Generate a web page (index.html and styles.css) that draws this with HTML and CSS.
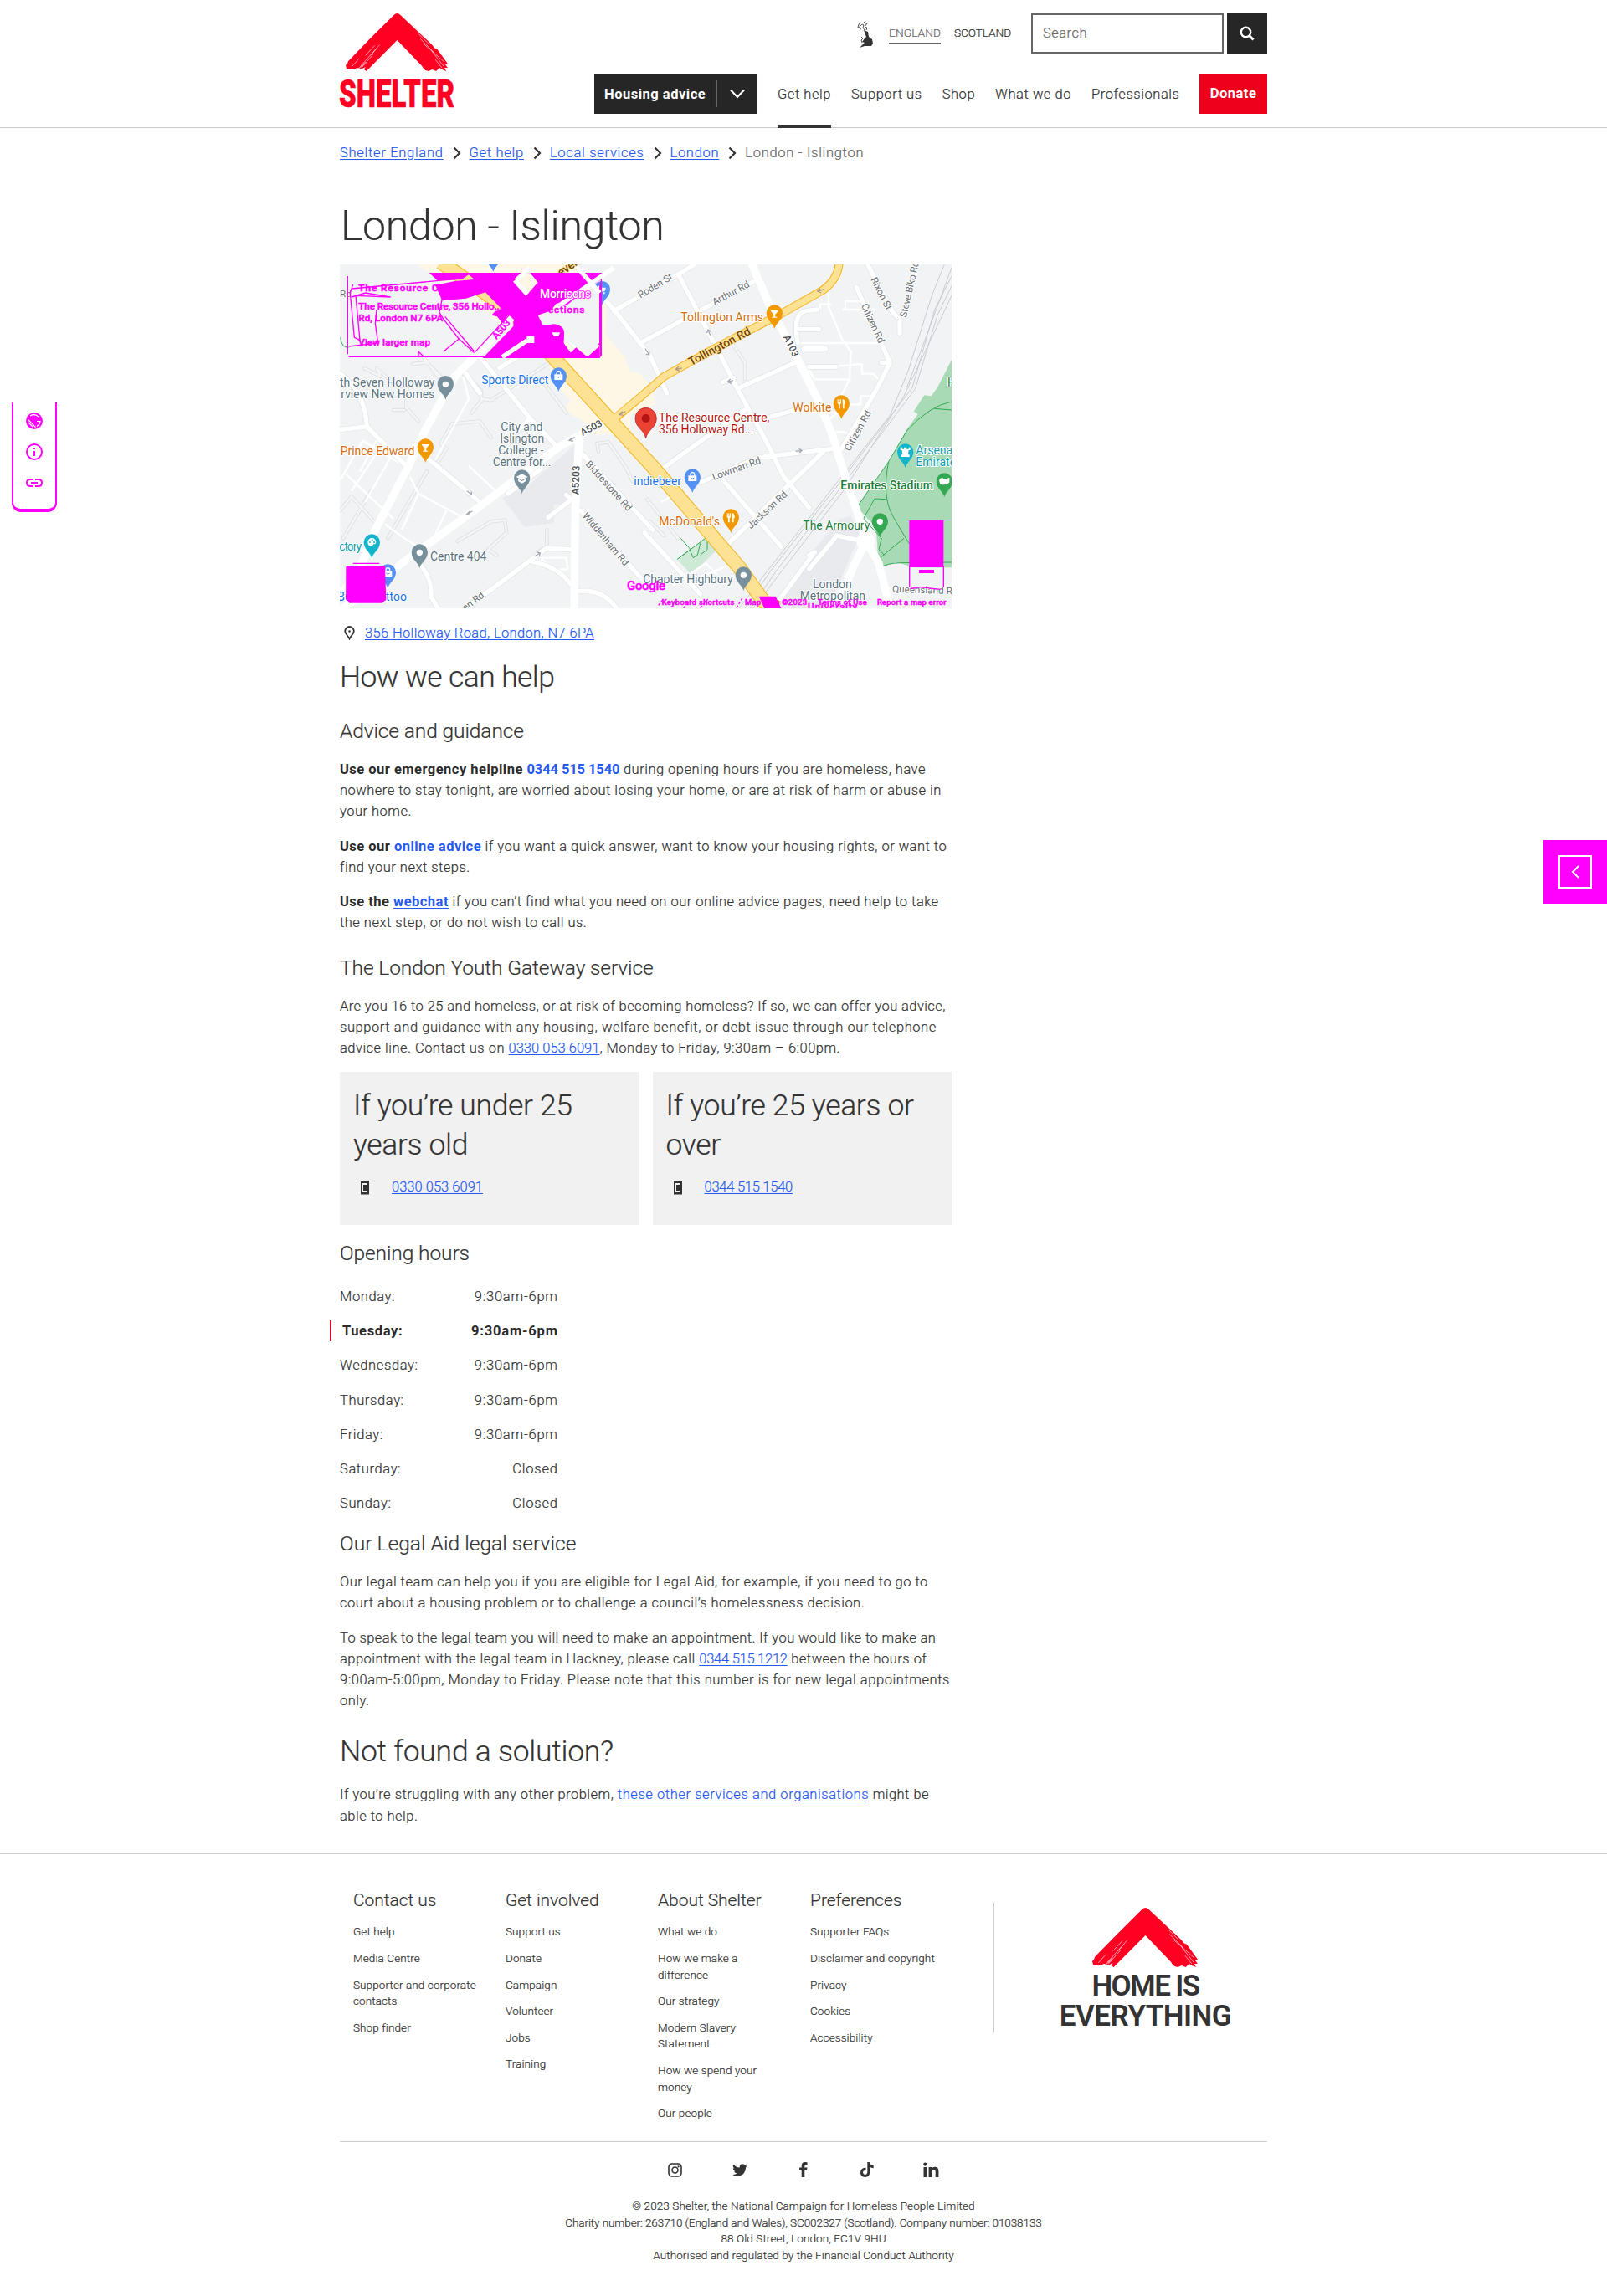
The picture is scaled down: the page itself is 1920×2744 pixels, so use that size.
FILE: index.html
```html
<!DOCTYPE html>
<html lang="en">
<head>
<meta charset="utf-8">
<title>London - Islington - Shelter England</title>
<link rel="stylesheet" href="styles.css">
</head>
<body>
<svg class="defs" width="0" height="0" aria-hidden="true">
  <defs>
    <symbol id="roof" viewBox="0 0 124 71" preserveAspectRatio="none">
      <path fill="#ff0022" d="M58 2Q62 -2 66 2L104 38L107 42L110 43L123 61L120 62L123 66L119 66L121 70L116 68L113 66L109 70L104 68L100 70L96 69L93 66L92 64L62 32.500L25 70L22 68L24 65L18 68L14 66L9 68L5 67L1 67L0 63L2 61L3 58L30 30Z"/>
      <path stroke="#fff" stroke-width=".6" fill="none" d="M41 38L18 64M37 43L30 51M33 50L19 66M35 39L24 51M24 59L15 67M16 55L7 65M90 31L106 47M88 25L101 38M94 37L119 59M104 46L118 64M108 56L116 66M22 62L16 67"/>
    </symbol>
    <symbol id="chev" viewBox="0 0 10 16"><path d="M1.500 1.500L8 8L1.500 14.500" fill="none" stroke="#333" stroke-width="2.200"/></symbol>
    <symbol id="phone" viewBox="0 0 10 17"><path fill="#333" fill-rule="evenodd" d="M0 1H8V0H10V16.500H0ZM2 3V14H8V3ZM3 5H7V12H3Z"/></symbol>
    <g id="pin"><path d="M0 57C-4 38 -29 26 -29 0A29 29 0 0 1 29 0C29 26 4 38 0 57Z"/></g>
    <g id="fork" fill="#fff"><path d="M-14 -16H-11V-6H-9V-16H-6V-6H-4V-16H-1V-4Q-1 1 -5 2V17H-10V2Q-14 1 -14 -4ZM4 -16Q13 -16 13 -4V2H10V17H5Z"/></g>
    <g id="glass" fill="#fff"><path d="M-13 -13H13V-10L3 1V10H9V13H-9V10H-3V1L-13 -10Z"/></g>
    <g id="bag"><path fill="#fff" d="M-15 -5H15V15H-15Z"/><path d="M-7 -4V-9A7 7 0 0 1 7 -9V-4" fill="none" stroke="#fff" stroke-width="4"/><path d="M-6 3Q0 10 6 3" fill="none" stroke="#5491f5" stroke-width="3"/></g>
    <path id="minor" d="M105 390L165 420L150 390L215 450L260 460L255 530L300 580M250 540H210M280 375L330 370L390 430M310 340L385 440M460 410L525 470V510M830 550L740 430M490 550L530 500L560 505L770 370M360 740L400 680L380 660L420 590L520 580L560 640M20 900L60 850L150 950M30 1000L130 830M190 1000L330 760M440 1010L560 940L610 935L615 980L550 1040L580 1060M700 1080L740 1040L760 1040M760 970V1040M945 690L940 660L980 655L1040 740L1070 800M1120 860L1230 1000M1130 940L1180 990M1410 280L1470 370V430"/>
    <path id="local" d="M20 410Q110 480 115 600L250 735M20 610L115 600M330 710L520 870M470 410L520 480M520 350L700 570L790 665M590 390L700 320M700 570L650 620M620 840L740 750M765 925L850 860L830 845M890 700L1140 970M880 900L1140 1190M310 1100Q350 1150 345 1210L370 1251M470 1251L740 1050L760 1035L850 1040M710 1085Q800 1100 850 1170M870 1190Q960 1180 1010 1251M640 80L860 310M780 200L915 80M860 18L1000 180L1130 345L1190 480M1000 185L1220 60L1290 18M1095 300L1500 80M1235 60L1380 340L1430 440L1540 640L1610 780L1700 890M1390 440L1430 425M1450 460L1650 370M1180 745L1470 540M1540 570L1650 540M1310 800L1520 710L1780 680M1390 790L1600 1030M1410 1020L1750 690M1660 300Q1640 190 1690 185L1730 180M1660 250H1735M1680 320H1760M1700 385H1795M1870 100L1990 370L1940 470L1810 690M1910 18L2000 190L2025 215V265M1990 370H1960M1110 980L1310 1200M1700 1110L1800 990L1890 1010M1570 1251L1720 1050L1700 1060"/>
  </defs>
</svg>

<header class="header">
  <div class="wrap header-in">
    <a class="logo" href="#">
      <svg class="logo-roof"><use href="#roof"/></svg>
      <svg class="logo-word" viewBox="0 0 137 34"><text x="-1" y="33" textLength="138" lengthAdjust="spacingAndGlyphs">SHELTER</text></svg>
    </a>
    <div class="header-right">
      <div class="top-row">
        <svg class="uk" viewBox="0 0 20 33"><path fill="#333" d="M8 12L13 14L14 20L18 23L19 28L17 31L9 31L3 33L7 29L9 27L6 26L9 22L11 20Z"/><path fill="none" stroke="#555" stroke-width="1" d="M9 12L7 9L8 6L6 5L3 8L1 9L2 5L5 3M8 3L10 1L9 4L12 4L9 8L12 9L11 12M5 9L3 13M5 20L7 22L5 24L6 27"/></svg>
        <a class="region current" href="#">ENGLAND</a>
        <a class="region" href="#">SCOTLAND</a>
        <div class="search">Search</div>
        <div class="search-btn"><svg width="20" height="20" viewBox="0 0 20 20"><circle cx="8.500" cy="8.500" r="5.700" fill="none" stroke="#fff" stroke-width="2.400"/><path d="M12.500 12.500L17.500 17.500" stroke="#fff" stroke-width="3"/></svg></div>
      </div>
      <nav class="nav">
        <a class="advice" href="#"><span>Housing advice</span><i></i><svg width="18" height="12" viewBox="0 0 18 12"><path d="M1 1.500L9 10L17 1.500" fill="none" stroke="#fff" stroke-width="2.200"/></svg></a>
        <a class="link active" href="#">Get help</a>
        <a class="link" href="#">Support us</a>
        <a class="link" href="#">Shop</a>
        <a class="link" href="#">What we do</a>
        <a class="link" href="#">Professionals</a>
        <a class="donate" href="#">Donate</a>
      </nav>
    </div>
  </div>
</header>

<main class="wrap main">
  <div class="crumbs">
    <a href="#">Shelter England</a><svg><use href="#chev"/></svg><a href="#">Get help</a><svg><use href="#chev"/></svg><a href="#">Local services</a><svg><use href="#chev"/></svg><a href="#">London</a><svg><use href="#chev"/></svg><span>London - Islington</span>
  </div>
  <h1>London - Islington</h1>

  <svg class="map" viewBox="18 18 2193 1233">
    <rect x="18" y="18" width="2193" height="1233" fill="#f1f3f4"/>
    <!-- land areas -->
    <path fill="#fef7e6" d="M295 18H860L975 120L970 270L1040 350L1060 405L1090 405L1130 450L1150 520L1060 560L1060 628H960L925 625L890 580L820 540L845 505L800 460L755 355L500 160Z"/>
    <path fill="#e8eaed" d="M600 855L690 815L750 760L860 665L850 870L785 880V945L680 960ZM1710 1050L1810 930L1850 920L1885 990L1850 1060L1800 1180L1760 1251H1560L1620 1200Z"/>
    <path fill="#a8dab5" d="M2211 360L2160 460L2138 490L2113 487L2075 545L2090 555L2050 610L1990 720L1872 888L1910 930L1940 960L1950 1108L2010 1085L2080 1105H2211Z"/>
    <path fill="#ceead6" d="M1230 1080L1340 985L1385 1025L1280 1130Z"/>
    <g fill="none" stroke="#34a853" stroke-width="3">
      <path d="M2211 510Q2130 525 2050 615L1985 725L1872 888M1985 725Q1960 850 2000 920T2060 1020M1895 930L1935 858L1975 860M1895 930L1960 1000L1950 1040L1970 1060M2040 1000L1940 1082M1950 1108Q1980 1088 2030 1088L2211 1086M2150 535L2211 540M1240 1000L1275 1040L1228 1075L1342 990M1272 1040L1285 1070L1300 1060L1310 1018M1310 1060L1335 1040V1010M20 280Q25 320 50 315"/>
    </g>
    <!-- railway -->
    <g fill="none" stroke="#c9ccd1" stroke-width="3">
      <path d="M2211 60L2150 180L2070 460L1810 800L1560 1120L1470 1251M2211 95L2160 200L2080 465L1820 810L1580 1120L1490 1251M2211 130L2040 490L1830 820L1600 1120L1500 1251M2185 18L2140 130L2055 400L1990 560L1800 800L1540 1130L1450 1251M2211 30L2100 330L2050 460"/>
    </g>
    <!-- residential streets: casing below, surface on top -->
    <g class="streets"><use href="#minor" class="casing"/><use href="#minor" class="surface"/></g>
    <g fill="none" stroke="#fff" stroke-width="7" stroke-linejoin="round">
      <path d="M20 790L100 650L250 740M60 830L160 680M110 870L200 710M40 770L210 930M150 650L90 760M180 950L250 1000L330 1050M240 970L300 840L450 920M300 840L270 780M400 900L350 1010M360 720L480 500L460 420M480 740L580 833M740 1070H830L835 1110L780 1115Z"/>
      <path d="M1770 120V170L1820 290L1850 330L1845 430L1800 520M1660 300H1950M1690 380L1720 430H1850M1820 180H1940M1830 180V150H1890M1740 180V160H1780M1720 390L1890 375V410H1930L1950 430M1885 520V490H1930M1830 520H1885M1790 620Q1850 610 1870 660M1765 580L1800 550M1170 870L1220 840M1210 1170L1330 1090L1370 1130M1280 1150L1430 1090M1980 1180H2060"/>
    </g>
    <!-- local roads -->
    <g class="streets"><use href="#local" class="road-edge"/><use href="#local" class="road-top"/></g>
    <!-- trunk roads -->
    <g fill="none" stroke="#fff" stroke-width="28" stroke-linejoin="round" stroke-linecap="round">
      <path d="M20 1200L80 1130L150 960L265 740L325 610L430 420L520 330L640 205M30 1251L240 1090L520 885L800 675L965 580M875 650L862 900L858 1251M1495 18L1565 180L1650 340L1730 500L1780 620L1830 780L1880 930L1905 1010L1860 1100L1790 1270M1905 1010L1950 1090L1990 1251"/>
      <circle cx="1903" cy="1010" r="22" stroke-width="22"/>
    </g>
    <g fill="none" stroke="#f5b21a" stroke-linejoin="round">
      <path stroke-width="52" d="M380 10L640 190L800 370L1000 590L1150 755L1330 965L1450 1105L1540 1230L1590 1251"/>
      <path stroke-width="30" d="M1010 565L1100 490L1180 420L1360 320L1600 195L1750 110Q1805 70 1808 10"/>
    </g>
    <g fill="none" stroke="#fde293" stroke-linejoin="round">
      <path stroke-width="46" d="M380 10L640 190L800 370L1000 590L1150 755L1330 965L1450 1105L1540 1230L1590 1251"/>
      <path stroke-width="24" d="M990 580L1100 490L1180 420L1360 320L1600 195L1750 110Q1805 70 1808 10"/>
    </g>
    <!-- one-way arrows -->
    <g fill="none" stroke="#a3a8b5" stroke-width="4">
      <path d="M860 638L840 649M851 638L840 649L855 652M493 903L473 914M484 903L473 914L488 917M474 830L491 844M489 832L491 844L478 845M718 1064L736 1052M724 1050L736 1052L733 1065M1652 688L1674 685M1664 679L1674 685L1666 693M1428 434L1408 439M1418 429L1408 439L1422 445M1346 272L1338 252M1334 264L1338 252L1349 259M1113 320L1127 342M1127 330L1127 342L1116 340"/>
      <path stroke="#b09a80" d="M1042 545L1020 556M1031 545L1020 556L1035 559M1244 390L1222 394M1233 384L1222 394L1236 400M1752 108L1730 114M1740 104L1730 114L1744 120"/>
    </g>
    <!-- road names -->
    <g class="road">
      <text x="888" y="634" class="dk" transform="rotate(-28 888 634)">A503</text>
      <text x="874" y="844" class="dk" textLength="104" transform="rotate(-88 874 844)">A5203</text>
      <text x="1607" y="278" class="dk" transform="rotate(64 1607 278)">A103</text>
      <text x="897" y="735" textLength="228" transform="rotate(48 897 735)">Biddestone Rd</text>
      <text x="886" y="920" textLength="236" transform="rotate(50 886 920)">Widdenham Rd</text>
      <text x="468" y="1262" transform="rotate(-37 468 1262)">en Rd</text>
      <text x="1096" y="140" textLength="137" transform="rotate(-31 1096 140)">Roden St</text>
      <text x="1361" y="165" textLength="145" transform="rotate(-28 1361 165)">Arthur Rd</text>
      <text x="1358" y="792" textLength="182" transform="rotate(-20 1358 792)">Lowman Rd</text>
      <text x="1492" y="968" textLength="180" transform="rotate(-43 1492 968)">Jackson Rd</text>
      <text x="1846" y="690" textLength="160" transform="rotate(-61 1846 690)">Citizen Rd</text>
      <text x="1886" y="165" textLength="152" transform="rotate(65 1886 165)">Citizen Rd</text>
      <text x="1920" y="72" textLength="126" transform="rotate(63 1920 72)">Rixon St</text>
      <text x="2048" y="210" textLength="205" transform="rotate(-77 2048 210)">Steve Biko Rd</text>
      <text x="1998" y="1193" textLength="215" transform="rotate(2 1998 1193)">Queensland R</text>
      <text x="18" y="136">Rd</text>
      <text x="1277" y="382" class="brown" textLength="245" transform="rotate(-28 1277 382)">Tollington Rd</text>
      <text x="810" y="62" class="brown" transform="rotate(-35 810 62)">even</text>
    </g>
    <!-- places -->
    <g class="place">
      <g fill="#78909c"><use href="#pin" x="397" y="446"/><use href="#pin" x="671" y="783"/><use href="#pin" x="304" y="1050"/><use href="#pin" x="1465" y="1131"/></g>
      <g fill="#f29900"><use href="#pin" x="325" y="672"/><use href="#pin" x="1576" y="192"/><use href="#pin" x="1816" y="516"/><use href="#pin" x="1420" y="924"/></g>
      <g fill="#5491f5"><use href="#pin" x="802" y="417"/><use href="#pin" x="1282" y="780"/><use href="#pin" x="190" y="1122"/><use href="#pin" x="958" y="107"/><use href="#pin" x="568" y="-12"/></g>
      <g fill="#12b5cb"><use href="#pin" x="133" y="1014"/><use href="#pin" x="2045" y="690"/></g>
      <g fill="#34a853"><use href="#pin" x="1954" y="939"/><use href="#pin" x="2185" y="795"/></g>
      <g fill="#fff"><circle cx="397" cy="448" r="11"/><circle cx="304" cy="1051" r="11"/><circle cx="1465" cy="1132" r="11"/><circle cx="1954" cy="940" r="11"/><path d="M650 780L671 769L692 780L671 791ZM657 787L671 795L685 787V795L671 803L657 795ZM2027 674H2033V680H2040V674H2050V680H2057V674H2063V684H2057L2055 700H2060V708H2030V700H2035L2033 684H2027ZM2166 792Q2175 775 2185 790L2203 782V800Q2190 812 2170 806Z"/><path fill-rule="evenodd" d="M118 1014A15 15 0 0 1 148 1014Q148 1023 139 1021Q134 1024 137 1029Q118 1030 118 1014ZM123 1014a3 3 0 1 0 6 0a3 3 0 1 0 -6 0ZM131 1006a3 3 0 1 0 6 0a3 3 0 1 0 -6 0ZM138 1014a3 3 0 1 0 6 0a3 3 0 1 0 -6 0Z"/><path d="M943 95H949L951 101H972L967 115H950ZM950 118h6v6h-6ZM962 118h6v6h-6Z"/></g>
      <use href="#glass" x="325" y="676"/><use href="#glass" x="1576" y="196"/><use href="#fork" x="1816" y="518"/><use href="#fork" x="1420" y="926"/><use href="#bag" x="802" y="417"/><use href="#bag" x="1282" y="780"/><use href="#bag" x="190" y="1122"/>
      <path fill="#ea4335" stroke="#b31412" stroke-width="2" d="M1115 641C1108 610 1077 603 1077 570A38 38 0 0 1 1153 570C1153 603 1122 610 1115 641Z"/><circle cx="1115" cy="570" r="15" fill="#b31412"/>
    </g>
    <g class="label">
      <g fill="#5c7480">
        <text x="18" y="457" textLength="340">th Seven Holloway</text><text x="22" y="499" textLength="336">rview New Homes</text>
        <text x="595" y="616" textLength="150">City and</text><text x="592" y="657" textLength="159">Islington</text><text x="586" y="700" textLength="162">College -</text><text x="566" y="741" textLength="209">Centre for...</text>
        <text x="342" y="1081" textLength="202">Centre 404</text><text x="1105" y="1161" textLength="322">Chapter Highbury</text>
        <text x="1713" y="1180" textLength="140">London</text><text x="1667" y="1222" textLength="235">Metropolitan</text>
      </g>
      <g fill="#1a73e8"><text x="526" y="448" textLength="240">Sports Direct</text><text x="1072" y="811" textLength="170">indiebeer</text><text x="10" y="1225" textLength="248">Bunch Tattoo</text></g>
      <g fill="#d56e0c"><text x="20" y="703" textLength="266">Prince Edward</text><text x="1240" y="223" textLength="296">Tollington Arms</text><text x="1642" y="547" textLength="138">Wolkite</text><text x="1162" y="955" textLength="218">McDonald's</text></g>
      <g fill="#129eaf"><text x="16" y="1045" textLength="80">ctory</text><text x="2083" y="700">Arsenal</text><text x="2083" y="741">Emirates</text></g>
      <g fill="#188038"><text x="1813" y="826" textLength="332" class="md">Emirates Stadium</text><text x="1678" y="970" textLength="240">The Armoury</text><text x="2196" y="457">Hi</text></g>
      <g fill="#b31412"><text x="1161" y="583" textLength="397">The Resource Centre,</text><text x="1161" y="625" textLength="340">356 Holloway Rd...</text></g>
    </g>
    <!-- highlighted panels over the map -->
    <g fill="#f0f">
      <path fill-rule="evenodd" d="M338 48H950L957 56V345L948 354H530L640 240V215L622 198L600 228L582 205L562 200L575 185L600 180L540 118L470 140L385 148L360 92L430 78L500 72L480 55L455 72L368 76ZM650 75L672 50L700 48L790 150L730 190L745 225L790 240L820 270V300L845 335L865 318L905 350H950V310L915 280L910 230L935 160L955 70L900 100L830 170L800 160L860 90L730 80L690 125Z" />
      <path d="M700 48H900L860 110L800 150L770 190L730 200L690 130L730 85ZM860 48H957V70L930 90L900 75L880 100L830 150L790 160Z"/>
      <path d="M42 1098H180L184 1220L170 1232H52L40 1215ZM2059 936H2182V1104H2059ZM2094 1113H2148V1125H2094ZM1520 1208H1580L1600 1251H1540Z"/>
    </g>
    <path fill="#f1f3f4" d="M728 200L830 165L890 120L948 100V300L910 340L865 310L825 290Q825 240 785 235L745 235Z"/>
    <path fill="#f0f" d="M748 262A37 30 0 0 1 822 262Q822 285 820 300L845 335L865 316L905 350L950 310V354H600L700 275ZM760 48H920L830 120L785 160L735 140Z"/>
    <g fill="none" stroke="#f0f" stroke-width="4">
      <path d="M955 60V345M46 60V340M50 349H950M65 90L55 120L70 280L90 290L75 130L200 135L110 120L60 135M60 105L440 70M150 180L145 230L155 300L50 312M385 140L375 190L390 215L445 285L390 330M445 285L500 335M395 205L500 330M300 345V330L320 350M65 1090H160M42 1100V1220M2060 1100V1175M2182 1100V1175M2062 1181L2100 1175L2170 1183" />
      <path stroke="#fff" stroke-width="16" d="M645 75L690 125M650 75L700 30M805 165L1000 30M870 30L950 120M600 350L690 290"/>
      <path stroke="#fff" stroke-width="24" d="M505 340L635 210"/>
      <path d="M500 335L625 200"/>
      <path stroke-dasharray="10 6" d="M1160 1240L1180 1215M1250 1250L1280 1215M1310 1250L1340 1215M1440 1250L1460 1215"/>
    </g>
    <path fill="#fff" d="M778 262H808L802 275H785ZM688 275H715V300H688Z"/>
    <g class="hot">
      <text x="85" y="115" textLength="330" class="b">The Resource Cen</text><text x="450" y="115">...</text>
      <text x="85" y="179" textLength="515">The Resource Centre, 356 Hollo...</text>
      <text x="85" y="221" textLength="303">Rd, London N7 6PA</text>
      <text x="85" y="308" textLength="257">View larger map</text>
      <text x="765" y="191" textLength="130">ections</text>
      <text x="735" y="139" textLength="183" class="lg">Morrisons</text>
      <text x="580" y="288" transform="rotate(-50 580 288)" class="sm">A503</text>
      <text x="1047" y="1184" textLength="138" class="g">Google</text>
      <text x="1172" y="1238" textLength="260" class="xs">Keyboard shortcuts</text><text x="1470" y="1238" textLength="222" class="xs">Map data ©2023</text><text x="1732" y="1238" textLength="175" class="xs">Terms of Use</text><text x="1944" y="1238" textLength="248" class="xs">Report a map error</text>
      <text x="1695" y="1258" textLength="178">University</text>
    </g>
  </svg>

  <p class="address"><svg width="13" height="17" viewBox="0 0 13 17"><path d="M6.500 15.500C5 12 1.200 9.500 1.200 6.300A5.300 5.300 0 0 1 11.800 6.300C11.800 9.500 8 12 6.500 15.500Z" fill="none" stroke="#333" stroke-width="1.800"/><circle cx="6.500" cy="6.500" r="1.200" fill="#333"/></svg><a href="#">356 Holloway Road, London, N7 6PA</a></p>

  <h2 class="h-help">How we can help</h2>
  <h3 class="h-advice">Advice and guidance</h3>
  <p><b>Use our emergency helpline <a class="tel" href="#">0344 515 1540</a></b> during opening hours if you are homeless, have<br>nowhere to stay tonight, are worried about losing your home, or are at risk of harm or abuse in<br>your home.</p>
  <p><b>Use our <a href="#">online advice</a></b> if you want a quick answer, want to know your housing rights, or want to<br>find your next steps.</p>
  <p><b>Use the <a href="#">webchat</a></b> if you can’t find what you need on our online advice pages, need help to take<br>the next step, or do not wish to call us.</p>

  <h3 class="h-youth">The London Youth Gateway service</h3>
  <p><span class="snug">Are you 16 to 25 and homeless, or at risk of becoming homeless? If so, we can offer you advice,</span><br><span class="loose">support and guidance with any housing, welfare benefit, or debt issue through our telephone</span><br>advice line. Contact us on <a class="tel" href="#">0330 053 6091</a>, Monday to Friday, 9:30am – 6:00pm.</p>

  <div class="cards">
    <section class="card"><h2>If you’re under 25<br>years old</h2><div class="call"><svg><use href="#phone"/></svg><a class="tel" href="#">0330 053 6091</a></div></section>
    <section class="card"><h2>If you’re 25 years or<br>over</h2><div class="call"><svg><use href="#phone"/></svg><a class="tel narrow" href="#">0344 515 1540</a></div></section>
  </div>

  <h3 class="h-hours">Opening hours</h3>
  <div class="hours">
    <div><span>Monday:</span><span>9:30am-6pm</span></div>
    <div class="today"><span>Tuesday:</span><span>9:30am-6pm</span></div>
    <div><span>Wednesday:</span><span>9:30am-6pm</span></div>
    <div><span>Thursday:</span><span>9:30am-6pm</span></div>
    <div><span>Friday:</span><span>9:30am-6pm</span></div>
    <div><span>Saturday:</span><span>Closed</span></div>
    <div><span>Sunday:</span><span>Closed</span></div>
  </div>

  <h3 class="h-legal">Our Legal Aid legal service</h3>
  <p>Our legal team can help you if you are eligible for Legal Aid, for example, if you need to go to<br>court about a housing problem or to challenge a council’s homelessness decision.</p>
  <p><span class="snug">To speak to the legal team you will need to make an appointment. If you would like to make an</span><br>appointment with the legal team in Hackney, please call <a class="tel narrow" href="#">0344 515 1212</a> between the hours of<br><span class="loose">9:00am-5:00pm, Monday to Friday. Please note that this number is for new legal appointments</span><br>only.</p>

  <h2 class="h-more">Not found a solution?</h2>
  <p>If you’re struggling with any other problem, <a class="loose" href="#">these other services and organisations</a> might be<br>able to help.</p>
</main>

<footer class="footer">
  <div class="wrap">
    <div class="foot-top">
      <div class="col"><h4>Contact us</h4><a>Get help</a><a>Media Centre</a><a>Supporter and corporate<br>contacts</a><a>Shop finder</a></div>
      <div class="col"><h4>Get involved</h4><a>Support us</a><a>Donate</a><a>Campaign</a><a>Volunteer</a><a>Jobs</a><a>Training</a></div>
      <div class="col"><h4>About Shelter</h4><a>What we do</a><a>How we make a<br>difference</a><a>Our strategy</a><a>Modern Slavery<br>Statement</a><a>How we spend your<br>money</a><a>Our people</a></div>
      <div class="col"><h4>Preferences</h4><a>Supporter FAQs</a><a>Disclaimer and copyright</a><a>Privacy</a><a>Cookies</a><a>Accessibility</a></div>
      <div class="motto"><svg><use href="#roof"/></svg><div class="m1">HOME IS</div><div class="m2">EVERYTHING</div></div>
    </div>
    <div class="social">
      <svg width="17" height="17" viewBox="0 0 17 17"><rect x="1" y="1" width="15" height="15" rx="4" fill="none" stroke="#333" stroke-width="1.600"/><circle cx="8.500" cy="8.500" r="3.500" fill="none" stroke="#333" stroke-width="1.600"/><circle cx="12.600" cy="4.300" r="1.100" fill="#333"/></svg>
      <svg class="bird" width="18" height="15" viewBox="0 0 18 15"><path fill="#333" d="M18 2Q17 2.600 16 2.700Q17 2 17.300 .6Q16.200 1.300 15 1.500Q13.800 .2 12.300 .2Q8.400 .5 8.700 4.500Q4.300 4.300 1.300 .8Q-.2 3.800 2.400 5.800Q1.500 5.700 .8 5.300Q.8 8.200 3.700 9Q2.900 9.200 2.100 9Q2.800 11.400 5.500 11.600Q3.200 13.400 0 13Q2.600 14.700 5.700 14.700Q16 14 16.200 4Q17.400 3.100 18 2Z"/></svg>
      <svg width="10" height="18" viewBox="0 0 10 18"><path fill="#333" d="M2.700 18V10H0V6.500H2.700V4Q3 .2 6.500 0Q8.500 0 9.500 .3V3.300H7.800Q6.300 3.300 6.300 4.800V6.500H9.500L9 10H6.300V18Z"/></svg>
      <svg class="note" width="16" height="18" viewBox="0 0 16 18"><path fill="#333" d="M8.300 0H11.200Q11.700 3.800 15.700 4.200V7.200Q13 7.200 11.200 5.800V12Q11 17.800 5.500 18Q.2 17.600 0 12.400Q.3 6.800 6.500 6.800V9.900Q3.200 9.700 3 12.300Q3.200 14.800 5.600 14.900Q8.200 14.800 8.300 12Z"/></svg>
      <svg width="19" height="18" viewBox="0 0 19 18"><path fill="#333" d="M.5 6H4.200V18H.5ZM2.300 .5A2.100 2.100 0 1 1 2.300 4.700A2.100 2.100 0 1 1 2.300 .5ZM6.600 6H10.200V7.600Q11.300 5.700 14 5.700Q18.400 5.800 18.400 11V18H14.700V11.800Q14.700 9 12.700 9Q10.400 9.100 10.300 11.800V18H6.600Z"/></svg>
    </div>
    <div class="legal">© 2023 Shelter, the National Campaign for Homeless People Limited<br><span>Charity number: 263710 (England and Wales), SC002327 (Scotland). Company number: 01038133</span><br>88 Old Street, London, EC1V 9HU<br>Authorised and regulated by the Financial Conduct Authority</div>
  </div>
</footer>

<aside class="tools">
  <svg width="20" height="20" viewBox="0 0 20 20"><circle cx="10" cy="10" r="10" fill="#f0f"/><path d="M2.500 8.500L11.500 17.500M3 12L8 17M5 4Q10 1 15 5M13 10.500H17Q16.500 14.500 13 16.500" fill="none" stroke="#fff" stroke-width="1.200"/></svg>
  <svg width="20" height="20" viewBox="0 0 20 20"><circle cx="10" cy="10" r="9" fill="none" stroke="#f0f" stroke-width="2"/><path d="M9 5H11V7H9ZM9 9H11V15H9Z" fill="#f0f"/></svg>
  <svg width="20" height="20" viewBox="0 0 20 20"><path d="M9 6H5Q1 6 1 10T5 14H9M11 6H15Q19 6 19 10T15 14H11M6 10H14" fill="none" stroke="#f0f" stroke-width="2"/></svg>
</aside>
<aside class="drawer"><div><svg width="10" height="16" viewBox="0 0 10 16"><path d="M9 1L2 8L9 15" fill="none" stroke="#fff" stroke-width="2"/></svg></div></aside>
</body>
</html>
```
FILE: styles.css
```css
* { box-sizing: border-box; }
body { margin: 0; position: relative; height: 2744px; overflow: hidden; background: #fff; color: #333; font: 300 16.5px/25.2px Roboto, "Liberation Sans", sans-serif; letter-spacing: .48px; white-space: nowrap; -webkit-text-stroke-width: .2px; }
a { color: #2659ee; text-decoration: underline; text-underline-offset: 2px; }
b { font-weight: 700; color: #2b2b2b; letter-spacing: .48px; -webkit-text-stroke-width: 0; }
svg { -webkit-text-stroke-width: 0; }
.defs { position: absolute; }
.wrap { width: 1108px; margin: 0 auto; }
.tel { letter-spacing: .02px; }
.tel.narrow { letter-spacing: -.25px; }
b .tel { letter-spacing: -.1px; }
.snug { letter-spacing: .4px; }
.loose { letter-spacing: .57px; }

/* header */
.header { height: 153px; border-bottom: 1px solid #ccc; }
.header-in { display: flex; justify-content: space-between; height: 153px; }
.logo { display: flex; flex-direction: column; width: 137px; padding-top: 16px; text-decoration: none; }
.logo-roof { width: 123px; height: 70px; margin-left: 7px; }
.logo-word { width: 137px; height: 34px; margin-top: 9px; overflow: visible; }
.logo-word text { font: 900 46px Roboto, sans-serif; letter-spacing: 0; fill: #ff0022; stroke: #ff0022; stroke-width: .5px; }
.header-right { width: 804px; padding-top: 16px; }
.top-row { display: flex; justify-content: flex-end; height: 48px; }
.uk { width: 20px; height: 33px; margin: 8px 18px 0 0; }
.region { height: 37px; padding-top: 11px; line-height: 25px; font-size: 13.7px; color: #333; text-decoration: none; width: 68px; margin-right: 24px; letter-spacing: -.1px; }
.region.current { width: 62px; margin-right: 16px; color: #666; border-bottom: 2px solid #666; letter-spacing: .1px; }
.search { width: 230px; height: 48px; border: 2px solid #666; padding: 9px 0 0 12px; color: #666; }
.search-btn { width: 48px; height: 48px; margin-left: 4px; background: #262626; display: flex; align-items: center; justify-content: center; }
.nav { display: flex; margin-top: 24px; height: 65px; line-height: 50px; }
.nav a { text-decoration: none; color: #333; letter-spacing: .55px; }
.nav .advice, .nav .donate { height: 48px; line-height: 47px; font-weight: 700; color: #fff; letter-spacing: .5px; -webkit-text-stroke-width: 0; }
.advice { display: flex; align-items: center; width: 195px; background: #262626; padding-left: 12px; }
.advice span { width: 133px; }
.advice i { width: 2px; height: 32px; background: #666; margin-right: 15px; }
.link { margin-left: 24px; height: 65px; }
.link.active { border-bottom: 4px solid #333; }
.nav .donate { margin-left: auto; width: 81px; background: #ee001c; text-align: center; }

/* breadcrumbs */
.crumbs { display: flex; align-items: center; margin-top: 17px; letter-spacing: .71px; }
.crumbs svg { width: 10px; height: 16px; margin: 0 10px 0 11px; }
.crumbs span { color: #666; }

/* content */
h1, h2, h3, h4, p { margin: 0; font-weight: 300; }
h1 { margin: 45px 0 16px 1px; font-size: 50px; line-height: 60px; letter-spacing: -.27px; }
h2 { font-size: 35.5px; line-height: 48px; letter-spacing: -.35px; }
h3 { font-size: 24.5px; line-height: 34px; letter-spacing: -.1px; }
.main p + p { margin-top: 16px; }
.h-help { margin-top: 16px; letter-spacing: -.6px; }
.h-advice { margin: 24px 0 15.5px; }
.h-youth { margin: 24.5px 0 16px; }
.h-hours { margin: 17px 0 13.5px; }
.h-legal { margin: 11px 0 16px; letter-spacing: .05px; }
.h-more { margin: 24px 0 15px; letter-spacing: -.25px; }
.address { display: flex; align-items: center; margin-top: 17px; letter-spacing: .36px; }
.address svg { margin: 0 12px 0 5px; }

.cards { display: flex; gap: 16px; width: 731px; margin-top: 16px; }
.card { flex: 1; height: 183px; padding: 17px 16px 0; background: #f1f1f1; }
.card h2 { line-height: 47px; }
.call { display: flex; align-items: center; margin-top: 14px; }
.call svg { width: 10px; height: 17px; margin: 0 27px 0 9px; }

.hours { width: 260px; }
.hours div { display: flex; justify-content: space-between; height: 41.2px; line-height: 41.2px; letter-spacing: .62px; }
.hours span + span { letter-spacing: .8px; margin-right: -.8px; }
.hours .today { font-weight: 700; color: #2b2b2b; align-items: center; margin-left: -12px; -webkit-text-stroke-width: 0; }
.hours .today::before { content: ""; width: 2px; height: 25px; background: #d5112b; }
.hours .today span:first-of-type { margin: 0 auto 0 13px; }

/* map */
.map { display: block; width: 731px; height: 411px; letter-spacing: 0; }
.map text { font-family: Roboto, sans-serif; }
.streets { fill: none; stroke-linejoin: round; stroke-linecap: round; }
.streets .casing { stroke: #dcdfe3; stroke-width: 13px; }
.streets .surface { stroke: #f4f5f6; stroke-width: 8px; }
.streets .road-edge { stroke: #e1e4e8; stroke-width: 20px; }
.streets .road-top { stroke: #fff; stroke-width: 16px; }
.label text { font-size: 42px; font-weight: 400; paint-order: stroke; stroke: #fff; stroke-width: 6px; stroke-linejoin: round; }
.label .md { font-weight: 500; }
.road text { font-size: 35px; font-weight: 400; fill: #6b7075; paint-order: stroke; stroke: #fff; stroke-width: 5px; }
.road .dk { fill: #4a4d51; font-weight: 500; }
.road .brown { fill: #73430c; font-size: 41px; font-weight: 500; stroke: #fde293; }
.hot text { font-size: 35px; font-weight: 500; fill: #f0f; stroke: #f0f; stroke-width: 1.5px; }
.hot .b { font-weight: 700; }
.hot .lg { font-size: 42px; fill: #fff; stroke: #f0f; stroke-width: 5px; paint-order: stroke; }
.hot .sm { font-size: 33px; }
.hot .xs { font-size: 28px; }
.hot .g { font-size: 45px; }

/* footer */
.footer { margin-top: 32px; border-top: 1px solid #ccc; letter-spacing: .1px; }
.foot-top { display: flex; height: 344px; padding: 40px 0 0 16px; border-bottom: 1px solid #ccc; }
.col { width: 182px; }
.col h4 { font-size: 21px; line-height: 30px; margin-bottom: 13.6px; letter-spacing: -.05px; }
.col a { display: block; margin-bottom: 12px; font-size: 13.5px; line-height: 19.6px; color: #333; text-decoration: none; }
.motto { flex: 1; height: 155px; margin: 18px 0 0 37px; border-left: 1px solid #ccc; display: flex; flex-direction: column; align-items: center; padding: 6px 0 0 35px; color: #333; font-size: 35px; line-height: 36px; font-weight: 700; -webkit-text-stroke-width: 0; }
.motto svg { width: 127px; height: 72px; flex: none; margin-bottom: 4px; }
.m1, .m2 { font-weight: 600; }
.m1 { letter-spacing: -1.6px; }
.m2 { letter-spacing: -.5px; }
.social { display: flex; align-items: center; justify-content: space-between; width: 324px; height: 67px; margin: 0 auto; }
.bird { margin-left: -3px; }
.note { margin-right: -3px; }
.legal { text-align: center; font-size: 13.5px; line-height: 19.7px; letter-spacing: .1px; color: #333; }
.legal span { letter-spacing: -.08px; }

/* floating widgets */
.tools { position: absolute; left: 14px; top: 481px; width: 54px; height: 131px; border: solid #f0f; border-width: 0 2px 4px; border-radius: 0 0 11px 11px; display: flex; flex-direction: column; align-items: center; gap: 17px; padding-top: 12px; }
.drawer { position: absolute; left: 1844px; top: 1004px; width: 76px; height: 76px; padding: 18px; background: #f0f; }
.drawer div { width: 40px; height: 40px; border: 2px solid #fff; display: flex; align-items: center; justify-content: center; }
```
